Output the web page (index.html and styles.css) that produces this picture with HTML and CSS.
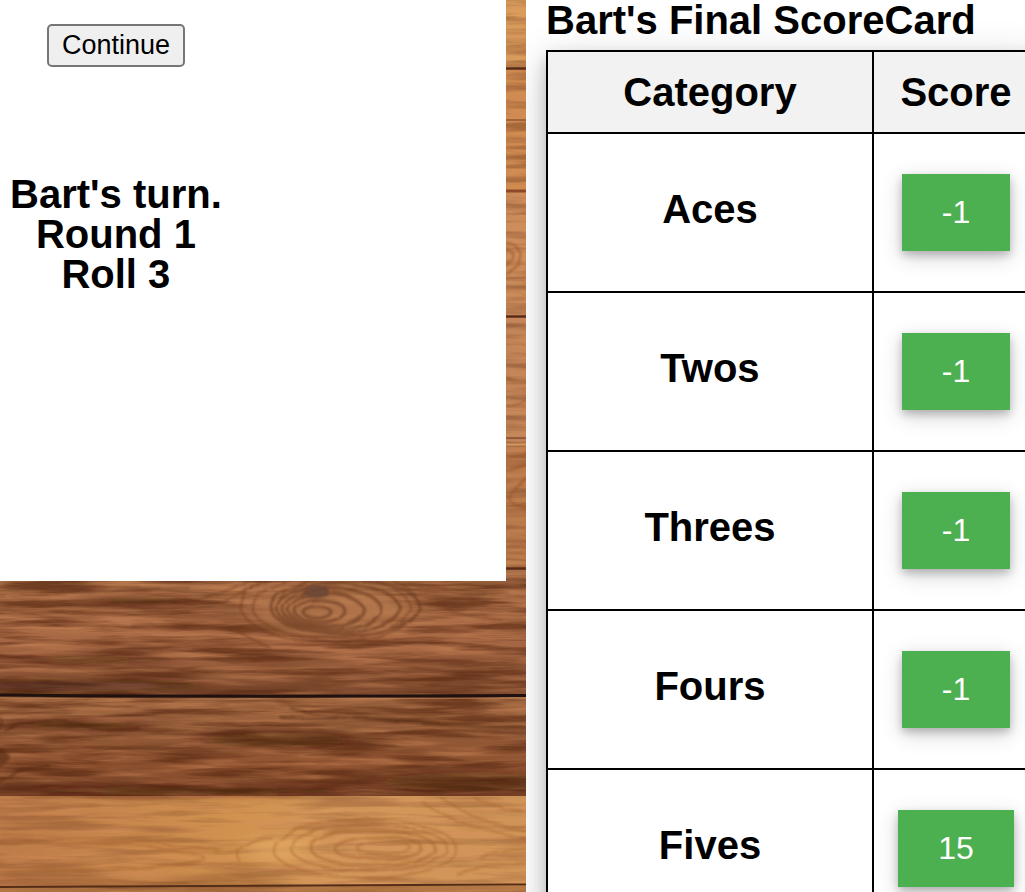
FILE: index.html
```html
<!DOCTYPE html>
<html lang="en">
<head>
<meta charset="utf-8">
<title>Bart's Final ScoreCard</title>
<link rel="stylesheet" href="styles.css">
</head>
<body>
<svg class="wood" viewBox="0 0 526 892" preserveAspectRatio="xMinYMin slice" aria-hidden="true">
  <defs>
    <filter id="grain" x="0" y="0" width="100%" height="100%" color-interpolation-filters="sRGB">
      <feTurbulence type="fractalNoise" baseFrequency="0.010 0.13" numOctaves="4" seed="8"/>
      <feColorMatrix values="0 0 0 0 .36  0 0 0 0 .17  0 0 0 0 .08  3.2 0 0 0 -1.35"/>
      <feGaussianBlur stdDeviation="0.7 0.5"/>
    </filter>
    <filter id="shine" x="0" y="0" width="100%" height="100%" color-interpolation-filters="sRGB">
      <feTurbulence type="fractalNoise" baseFrequency="0.012 0.15" numOctaves="3" seed="31"/>
      <feColorMatrix values="0 0 0 0 .84  0 0 0 0 .56  0 0 0 0 .37  0 3 0 0 -1.3"/>
      <feGaussianBlur stdDeviation="0.7 0.5"/>
    </filter>
    <filter id="stain" x="0" y="0" width="100%" height="100%" color-interpolation-filters="sRGB">
      <feTurbulence type="fractalNoise" baseFrequency="0.006 0.035" numOctaves="3" seed="14"/>
      <feColorMatrix values="0 0 0 0 .34  0 0 0 0 .17  0 0 0 0 .09  0 0 3 0 -1.4"/>
    </filter>
    <filter id="wobble" x="-10%" y="-10%" width="120%" height="120%">
      <feTurbulence type="fractalNoise" baseFrequency="0.02 0.06" numOctaves="2" seed="5"/>
      <feDisplacementMap in="SourceGraphic" scale="7"/>
      <feGaussianBlur stdDeviation="0.9"/>
    </filter>
    <filter id="soft" x="-40%" y="-150%" width="180%" height="400%"><feGaussianBlur stdDeviation="16 4"/></filter>
    <linearGradient id="upper" x1="0" y1="0" x2="0" y2="1">
      <stop offset="0" stop-color="#a97048"/><stop offset=".5" stop-color="#aa6b46"/><stop offset=".8" stop-color="#965c3b"/><stop offset="1" stop-color="#7c492d"/>
    </linearGradient>
    <linearGradient id="middle" x1="0" y1="0" x2="0" y2="1">
      <stop offset="0" stop-color="#ab7047"/><stop offset=".35" stop-color="#905937"/><stop offset=".7" stop-color="#925532"/><stop offset="1" stop-color="#764327"/>
    </linearGradient>
    <linearGradient id="lower" x1="0" y1="0" x2="1" y2="0">
      <stop offset="0" stop-color="#bd7b49"/><stop offset=".45" stop-color="#d1924f"/><stop offset=".65" stop-color="#d4985b"/><stop offset="1" stop-color="#d09457"/>
    </linearGradient>
    <clipPath id="upperClip"><rect y="571" width="526" height="122"/></clipPath>
    <clipPath id="lowerClip"><rect y="797" width="526" height="87"/></clipPath>
  </defs>
  <rect width="526" height="68" fill="#d99c5b"/>
  <rect y="68" width="526" height="123" fill="#cf8b50"/>
  <rect y="191" width="526" height="125" fill="#cc8d5b"/>
  <rect y="316" width="526" height="128" fill="#c38659"/>
  <rect y="444" width="526" height="125" fill="#b87a4b"/>
  <rect y="569" width="526" height="126" fill="url(#upper)"/>
  <rect y="695" width="526" height="101" fill="url(#middle)"/>
  <rect y="796" width="526" height="90" fill="url(#lower)"/>
  <rect y="886" width="526" height="6" fill="#b07743"/>
  <rect y="575" width="526" height="221" filter="url(#stain)" opacity=".4"/>
  <rect y="575" width="526" height="221" filter="url(#shine)" opacity=".4"/>
  <rect y="575" width="526" height="221" filter="url(#grain)" opacity=".7"/>
  <rect y="796" width="526" height="96" filter="url(#shine)" opacity=".35"/>
  <rect y="796" width="526" height="96" filter="url(#grain)" opacity=".25"/>
  <rect width="526" height="575" filter="url(#grain)" opacity=".35"/>
  <rect width="526" height="575" filter="url(#shine)" opacity=".35"/>

  <g filter="url(#soft)" fill="#371a0b">
    <ellipse cx="145" cy="600" rx="50" ry="4" opacity=".55"/>
    <ellipse cx="60" cy="686" rx="150" ry="5" opacity=".6"/>
    <ellipse cx="90" cy="660" rx="90" ry="4" opacity=".35"/>
    <ellipse cx="80" cy="725" rx="80" ry="4" opacity=".5"/>
    <ellipse cx="275" cy="740" rx="75" ry="7" opacity=".45"/>
    <ellipse cx="190" cy="791" rx="180" ry="4" opacity=".5"/>
    <ellipse cx="470" cy="782" rx="90" ry="9" opacity=".45"/>
    <ellipse cx="60" cy="882" rx="70" ry="3" opacity=".4"/>
    <ellipse cx="215" cy="882" rx="60" ry="3" opacity=".4"/>
  </g>

  <g clip-path="url(#upperClip)">
    <ellipse cx="330" cy="612" rx="85" ry="24" fill="#b67a50" opacity=".75" filter="url(#soft)"/>
    <g filter="url(#wobble)" fill="none" stroke="#6b3a20" stroke-width="3" opacity=".65">
      <ellipse cx="317" cy="612" rx="14" ry="6"/><ellipse cx="320" cy="611" rx="25" ry="11"/>
      <ellipse cx="326" cy="610" rx="37" ry="16"/><ellipse cx="332" cy="609" rx="49" ry="20"/>
      <ellipse cx="338" cy="608" rx="61" ry="24"/><ellipse cx="345" cy="607" rx="74" ry="28"/>
      <g stroke-width="1.500"><ellipse cx="331" cy="607" rx="78" ry="31"/><ellipse cx="330" cy="606" rx="89" ry="36"/></g>
    </g>
    <g filter="url(#wobble)" fill="none" stroke="#6b3a20" stroke-width="1.600" opacity=".55">
      <path d="M170 612Q230 608 260 582M150 604Q220 602 250 580M130 625Q220 615 270 648M360 578Q430 590 526 596M390 576Q450 584 526 586M440 605Q480 622 526 619M0 588H160M0 596Q100 592 190 588"/>
    </g>
    <ellipse cx="316" cy="592" rx="14" ry="6" fill="#674534" opacity=".8" filter="url(#wobble)"/>
  </g>

  <g filter="url(#wobble)" fill="none" stroke="#4d2511" stroke-width="2" opacity=".55">
    <path d="M-4 716Q10 722-4 730M-4 748Q20 756-4 768M-4 784Q20 766 50 766M5 732Q40 716 80 725T140 728M290 708Q350 724 526 727M280 718Q360 716 440 723"/>
    <ellipse cx="0" cy="756" rx="6" ry="6" fill="#4d2511"/>
  </g>

  <g clip-path="url(#lowerClip)">
    <ellipse cx="280" cy="848" rx="36" ry="14" fill="#e4ab65" opacity=".7" filter="url(#soft)"/>
    <g filter="url(#wobble)" fill="none" stroke="#a8642f" stroke-width="2" opacity=".5">
      <ellipse cx="384" cy="848" rx="27" ry="7"/>
      <g stroke-width="3"><ellipse cx="378" cy="848" rx="44" ry="12"/><ellipse cx="373" cy="848" rx="62" ry="18"/></g>
      <ellipse cx="369" cy="848" rx="78" ry="23"/><ellipse cx="365" cy="849" rx="92" ry="29"/>
      <path d="M-4 842Q130 840 190 853T70 870-4 878M0 835Q100 838 170 845T215 852M240 862Q230 844 270 836M420 800Q450 825 526 838M440 797Q470 820 526 830M470 796Q490 808 526 812M480 858Q502 850 526 849M455 873Q490 862 526 863"/>
    </g>
  </g>

  <g fill="none" stroke="#5a2c18">
    <path d="M500 68.500H526M500 316.500H526M500 568.500H526" stroke-width="2.500"/>
    <path d="M500 191H526" stroke="#8c4a28" stroke-width="3"/>
    <path d="M500 444.500H526" stroke="#d49b61" stroke-width="2"/>
    <path d="M500 120H526M500 438H526" opacity=".4" stroke-width="2"/>
    <g filter="url(#wobble)">
      <path d="M500 375Q516 386 532 380M500 405Q514 410 532 396M500 462Q515 459 532 453M500 471Q515 468 532 462M532 478Q508 487 508 496T532 508M500 275Q525 267 520 253T500 243M500 265Q516 264 514 256T500 250" stroke="#965326" opacity=".6" stroke-width="2"/>
    </g>
    <path d="M0 695Q180 697 526 695.500" stroke="#1f1110" stroke-width="3"/>
    <path d="M0 698Q180 700 526 698" stroke="#c38859" opacity=".6"/>
    <path d="M0 887Q200 887 526 884.500" stroke="#542d18" stroke-width="2"/>
  </g>
</svg>

<main class="game">
  <section class="turn">
    <button class="continue" type="button">Continue</button>
    <p class="status">Bart's turn.<br>Round 1<br>Roll 3</p>
  </section>
  <section class="card">
    <h1 class="title">Bart's Final ScoreCard</h1>
    <table class="scores">
      <thead>
        <tr><th class="category" scope="col">Category</th><th class="points" scope="col">Score</th></tr>
      </thead>
      <tbody>
        <tr><th scope="row">Aces</th><td><button class="score" type="button">-1</button></td></tr>
        <tr><th scope="row">Twos</th><td><button class="score" type="button">-1</button></td></tr>
        <tr><th scope="row">Threes</th><td><button class="score" type="button">-1</button></td></tr>
        <tr><th scope="row">Fours</th><td><button class="score" type="button">-1</button></td></tr>
        <tr><th scope="row">Fives</th><td><button class="score" type="button">15</button></td></tr>
      </tbody>
    </table>
  </section>
</main>
</body>
</html>
```
FILE: styles.css
```css
* {
  box-sizing: border-box;
}

body {
  margin: 0;
  height: 100vh;
  overflow: hidden;
  font-family: "Liberation Sans", Arial, sans-serif;
  font-size: 40px;
  line-height: 40px;
  color: #000;
}

.wood {
  position: absolute;
  top: 0;
  left: 0;
  width: calc(100% - 499px);
  height: 100%;
}

.game {
  position: relative;
  display: grid;
  grid-template-columns: minmax(0, 1fr) 499px;
  align-items: start;
}

.turn {
  display: flex;
  flex-direction: column;
  align-items: flex-start;
  min-height: 581px;
  margin-right: 20px;
  padding: 24px 10px;
  background: #fff;
}

.continue {
  margin-left: 37px;
  padding: 4px 13px;
  border: 2px solid #767676;
  border-radius: 5px;
  background: #efefef;
  color: #000;
  font-family: inherit;
  font-size: 27px;
  line-height: 31px;
}

.status {
  margin: 107px 0 0;
  font-weight: bold;
  text-align: center;
}

.card {
  min-height: 100vh;
  padding: 0 20px;
  background: #fff;
  overflow: hidden;
}

.title {
  margin: 0 0 10px;
  font-size: 40px;
  font-weight: bold;
  white-space: nowrap;
}

.scores {
  table-layout: fixed;
  width: 494px;
  border-collapse: collapse;
  background: #fff;
  box-shadow: 0 8px 16px rgba(0, 0, 0, 0.2), 0 12px 40px rgba(0, 0, 0, 0.19);
}

.scores th,
.scores td {
  padding: 20px;
  border: 2px solid #000;
  text-align: center;
  vertical-align: baseline;
}

.scores thead th {
  background: #f2f2f2;
}

.category {
  width: 326px;
}

.score {
  display: inline-block;
  margin: 20px 4px;
  padding: 20px 40px;
  border: 0;
  background: #4caf50;
  color: #fff;
  font-family: inherit;
  font-size: 32px;
  line-height: 37px;
  box-shadow: 0 4px 8px rgba(0, 0, 0, 0.2), 0 6px 20px rgba(0, 0, 0, 0.19);
}
```
